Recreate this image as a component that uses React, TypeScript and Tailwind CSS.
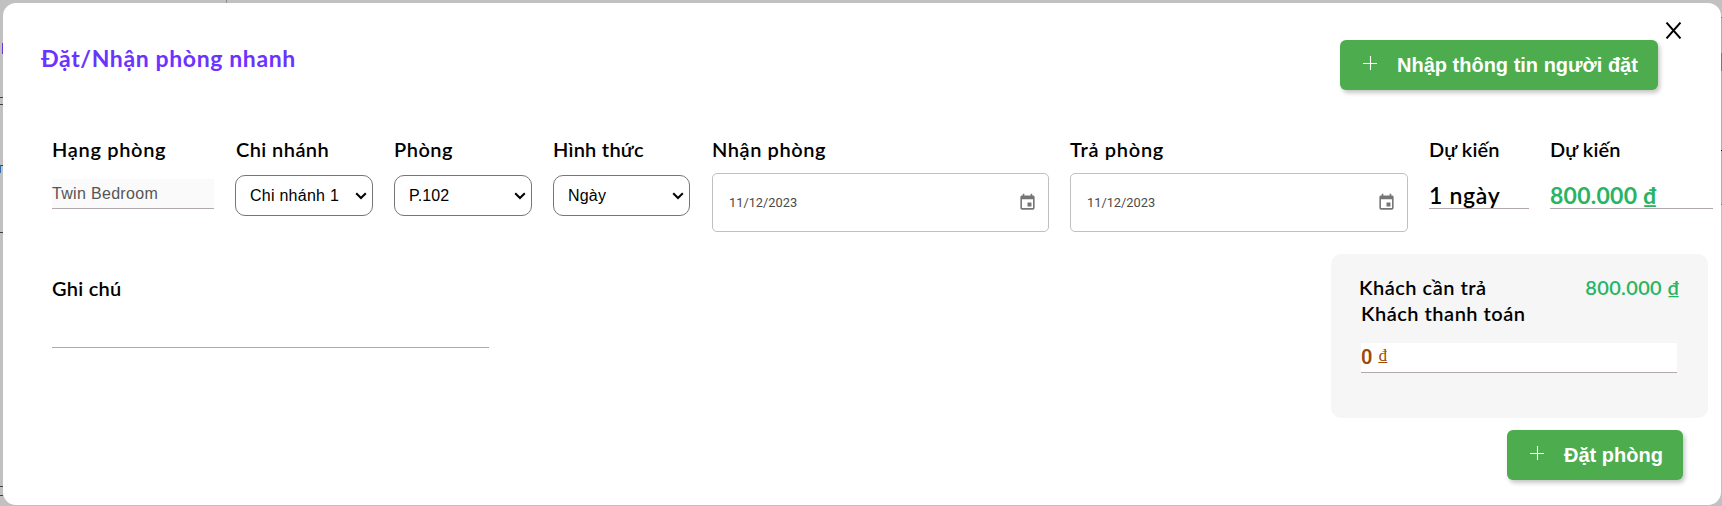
import React from 'react';

const label = "block h-6 font-['Lato','Noto_Sans',sans-serif] text-[20px] leading-6 font-semibold whitespace-nowrap text-black";

function Plus() {
  return (
    <svg width="14" height="14" viewBox="0 0 14 14" className="shrink-0">
      <path d="M7.500 0v14M0 7.500h14" stroke="#fff" strokeWidth="1.100" fill="none" />
    </svg>
  );
}

function GreenButton({ text, className }: { text: string; className: string }) {
  return (
    <button
      className={`flex h-[50px] items-center rounded-md bg-[#4cac4e] pl-[23px] text-white shadow-[2px_3px_4px_rgba(0,0,0,0.22)] ${className}`}
    >
      <span className="pb-1">
        <Plus />
      </span>
      <span className="ml-[20px] font-['Liberation_Sans',sans-serif] text-[20px] leading-6 font-bold whitespace-nowrap">{text}</span>
    </button>
  );
}

function SelectField({ title, value, className, tracking, valueTracking }: { title: string; value: string; className: string; tracking: string; valueTracking: string }) {
  return (
    <div className={className}>
      <span className={`${label} ${tracking}`}>{title}</span>
      <div className="mt-[14px] flex h-[41px] items-center justify-between rounded-[10px] border border-[#767676] pr-[5px] pl-[14px] font-['Liberation_Sans',sans-serif] text-[16px] text-black">
        <span className={`whitespace-nowrap ${valueTracking}`}>{value}</span>
        <svg width="12" height="8" viewBox="0 0 12 8" className="shrink-0">
          <path d="M1.200 1.200 6 6l4.800-4.800" fill="none" stroke="#000" strokeWidth="2" />
        </svg>
      </div>
    </div>
  );
}

function DateField({ title, className, tracking }: { title: string; className: string; tracking: string }) {
  return (
    <div className={className}>
      <span className={`${label} ${tracking}`}>{title}</span>
      <div className="mt-[12px] flex h-[59px] items-center justify-between rounded-[5px] border border-[#c0c0c0] pr-[11px] pl-4">
        <span className="font-['Roboto',sans-serif] text-[12.800px] text-[#4a4a4a]">11/12/2023</span>
        <svg width="19" height="19" viewBox="0 0 24 24" fill="#757575" className="mb-px">
          <path d="M17 12h-5v5h5v-5zM16 1v2H8V1H6v2H5c-1.110 0-1.990.9-1.990 2L3 19c0 1.100.890 2 2 2h14c1.100 0 2-.9 2-2V5c0-1.100-.9-2-2-2h-1V1h-2zm3 18H5V8h14v11z" />
        </svg>
      </div>
    </div>
  );
}

function LeftEdge() {
  return (
    <div className="flex w-[3px] flex-col items-end">
      <div className="mt-[40px] h-[11px] w-px bg-[#6b33d8]" />
      <div className="mt-[43px] h-[8px] w-[3px] border-y border-[#3c4148]" />
      <div className="mt-[60px] h-[8px] w-[3px] border-t border-l border-t-[#3c4148] border-l-[#2f6fae]" />
      <div className="mt-[59px] h-px w-[3px] bg-[#3c4148]" />
      <div className="mt-[253px] h-[10px] w-[3px] border-y border-[#3c4148]" />
    </div>
  );
}

function RightEdge() {
  return (
    <div className="flex w-px flex-col">
      <div className="mt-[14px] h-px bg-[#3d8a66]" />
      <div className="h-[35px] bg-[#9fb5ac]" />
      <div className="h-[18px] bg-[#5d8a64]" />
      <div className="h-[79px] bg-[#9fb5ac]" />
      <div className="h-px bg-[#111]" />
      <div className="h-[53px] bg-[#9fb5ac]" />
      <div className="h-px bg-[#3d8a66]" />
    </div>
  );
}

export default function App() {
  return (
    <div className="h-[506px] w-[1722px] overflow-hidden bg-[#c1c1c1]">
      <div className="ml-[226px] h-[3px] w-px bg-[#8c8c8c]" />
      <div className="flex h-[503px]">
        <LeftEdge />
        <div className="h-[502px] w-[1718px] shrink-0 rounded-[13px] bg-white">
          <header className="flex h-[134px] items-start pl-[38px]">
            <h1 className="mt-[41px] w-[1299px] font-['Lato','Noto_Sans',sans-serif] text-[23px] leading-7 font-bold tracking-[0.62px] whitespace-nowrap text-[#6b33ff]">
              Đặt/Nhận phòng nhanh
            </h1>
            <GreenButton text="Nhập thông tin người đặt" className="mt-[37px] w-[318px]" />
            <button aria-label="Đóng" className="mt-[19px] ml-[7px]">
              <svg width="17" height="17" viewBox="0 0 17 17">
                <path d="M1.500.5 15.500 16.500M15.500.5 1.500 16.500" stroke="#000" strokeWidth="1.900" fill="none" />
              </svg>
            </button>
          </header>

          <section className="flex h-[114px] items-start pl-[49px]">
            <div className="w-[162px]">
              <span className={`${label} tracking-[0.68px]`}>Hạng phòng</span>
              <div className="mt-[18px] h-[30px] border-b border-[#b3a9ac] bg-[#fafafa] font-['Liberation_Sans',sans-serif] text-[16px] leading-[30px] tracking-[0.32px] text-[#555]">
                Twin Bedroom
              </div>
            </div>
            <SelectField title="Chi nhánh" value="Chi nhánh 1" className="ml-[21px] w-[138px]" tracking="tracking-[0.42px] pl-px" valueTracking="tracking-[0.25px]" />
            <SelectField title="Phòng" value="P.102" className="ml-[21px] w-[138px]" tracking="tracking-[0.5px]" valueTracking="tracking-[0.1px]" />
            <SelectField title="Hình thức" value="Ngày" className="ml-[21px] w-[137px]" tracking="tracking-[0.25px]" valueTracking="tracking-[0.2px]" />
            <DateField title="Nhận phòng" className="ml-[22px] w-[337px]" tracking="tracking-[0.58px]" />
            <DateField title="Trả phòng" className="ml-[21px] w-[338px]" tracking="tracking-[0.7px]" />
            <div className="ml-[21px] w-[100px]">
              <span className={`${label} tracking-[0.15px]`}>Dự kiến</span>
              <div className="mt-[18px] h-[30px] border-b border-[#b3a9ac] font-['Lato','Noto_Sans',sans-serif] text-[23px] leading-[32px] font-semibold tracking-[0.7px] whitespace-nowrap text-black">
                1 ngày
              </div>
            </div>
            <div className="ml-[21px] w-[163px]">
              <span className={`${label} tracking-[0.15px]`}>Dự kiến</span>
              <div className="mt-[18px] h-[30px] border-b border-[#b3a9ac] font-['Lato','Noto_Sans',sans-serif] text-[23px] leading-[32px] font-bold tracking-[0.25px] whitespace-nowrap text-[#28b463]">
                800.000 ₫
              </div>
            </div>
          </section>

          <section className="flex items-start pt-[3px] pl-[49px]">
            <div className="mt-[22px] w-[437px]">
              <span className={`${label} tracking-[0.25px]`}>Ghi chú</span>
              <div className="h-[48px] border-b border-[#b3a9ac]" />
            </div>
            <div className="ml-[842px] w-[377px]">
              <div className="h-[164px] rounded-[10px] bg-[#f6f6f6] pt-[21px] pr-[28px] pl-[28px]">
                <div className="flex justify-between">
                  <span className={`${label} tracking-[0.5px]`}>Khách cần trả</span>
                  <span className="font-['Lato','Noto_Sans',sans-serif] text-[20px] leading-6 font-semibold tracking-[0.35px] text-[#28b463]">800.000 ₫</span>
                </div>
                <span className={`${label} mt-[2px] ml-[2px] tracking-[0.5px]`}>Khách thanh toán</span>
                <div className="mt-[18px] mr-[3px] ml-[2px] flex h-[30px] items-baseline border-b border-[#b3a9ac] bg-white text-[#9c4a08]">
                  <span className="font-['Roboto',sans-serif] text-[20px] leading-[28px] font-semibold">0</span>
                  <span className="relative -top-[3px] ml-[6px] font-['Liberation_Serif',serif] text-[17px]">₫</span>
                </div>
              </div>
              <GreenButton text="Đặt phòng" className="mt-[12px] ml-[176px] w-[176px]" />
            </div>
          </section>
        </div>
        <RightEdge />
      </div>
    </div>
  );
}
